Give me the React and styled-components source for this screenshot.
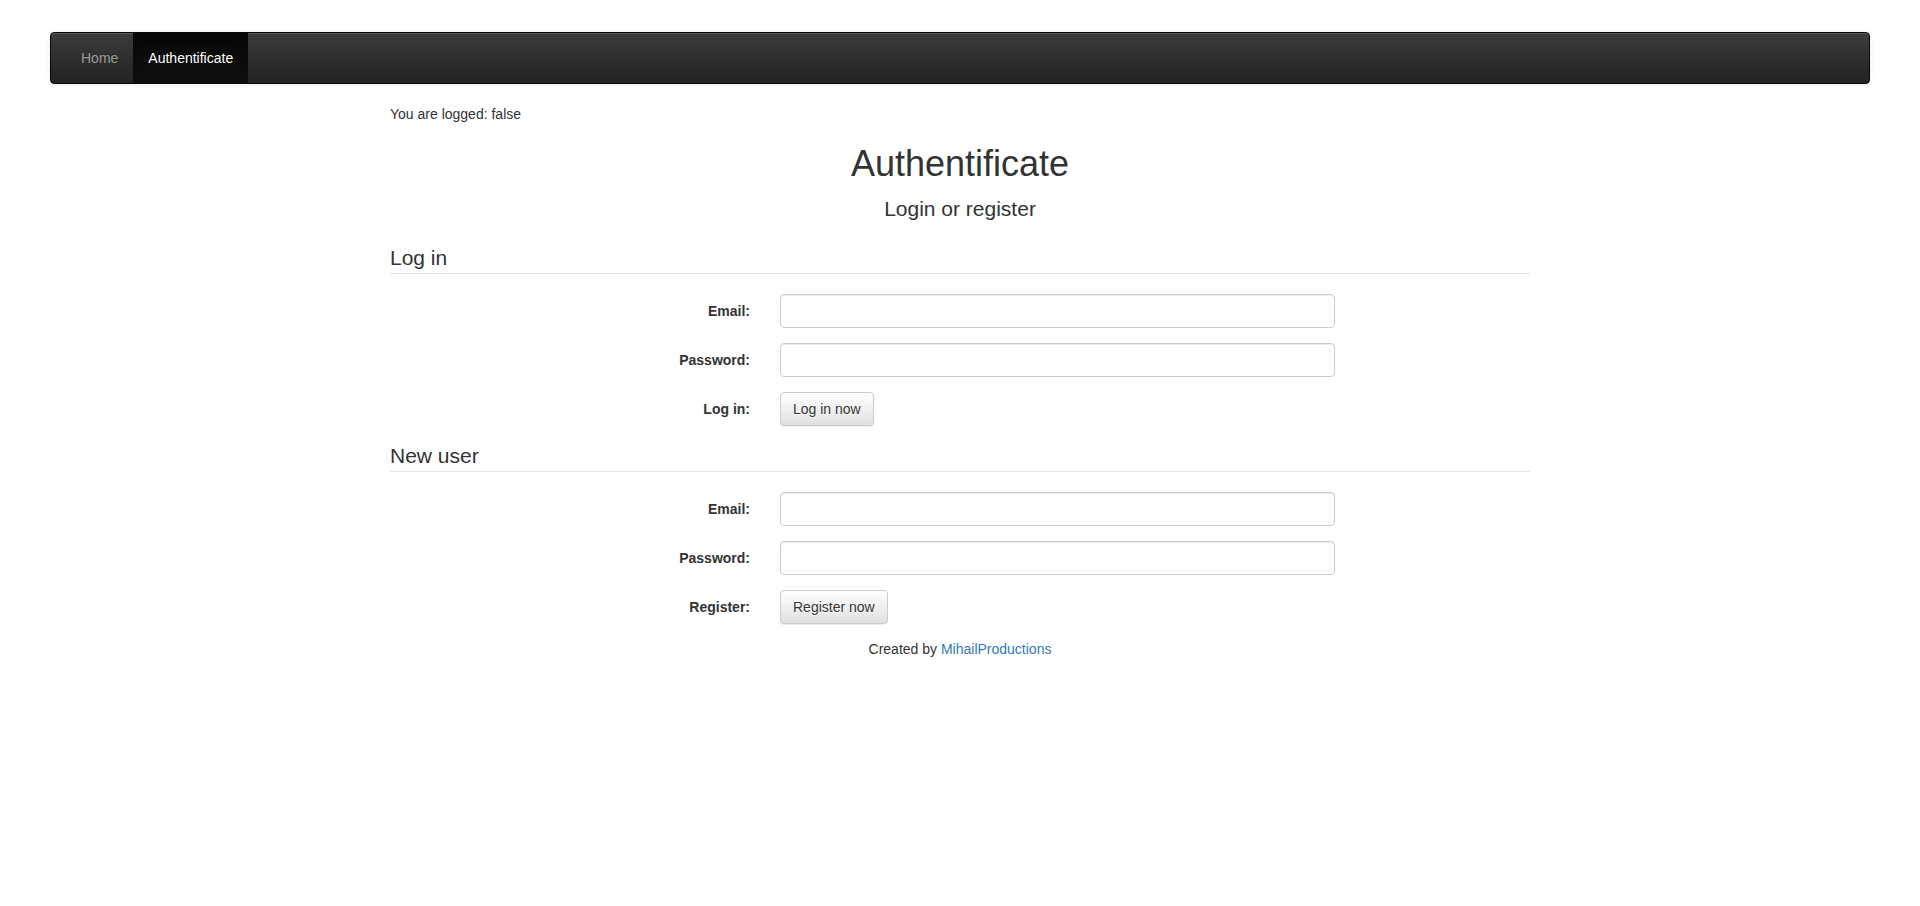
import React from 'react';
import styled, { createGlobalStyle } from 'styled-components';

const GlobalStyle = createGlobalStyle`
  * {
    box-sizing: border-box;
  }
  body {
    margin: 0;
    background: #fff;
    font-family: 'Liberation Sans', Arial, Helvetica, sans-serif;
    font-size: 14px;
    line-height: 1.42857143;
    color: #333;
  }
`;

export default function App() {
  return (
    <>
      <GlobalStyle />
      <Navbar>
        <NavList>
          <NavItem>Home</NavItem>
          <NavItem $active>Authentificate</NavItem>
        </NavList>
      </Navbar>
      <Container>
        <Status>You are logged: false</Status>
        <H1>Authentificate</H1>
        <Lead>Login or register</Lead>
        <Fieldset>
          <Legend>Log in</Legend>
          <FormGroup>
            <Label>Email:</Label>
            <Field>
              <Input type='email' />
            </Field>
          </FormGroup>
          <FormGroup>
            <Label>Password:</Label>
            <Field>
              <Input type='password' />
            </Field>
          </FormGroup>
          <FormGroup>
            <Label>Log in:</Label>
            <Field>
              <Btn type='button'>Log in now</Btn>
            </Field>
          </FormGroup>
        </Fieldset>
        <Fieldset>
          <Legend>New user</Legend>
          <FormGroup>
            <Label>Email:</Label>
            <Field>
              <Input type='email' />
            </Field>
          </FormGroup>
          <FormGroup>
            <Label>Password:</Label>
            <Field>
              <Input type='password' />
            </Field>
          </FormGroup>
          <FormGroup>
            <Label>Register:</Label>
            <Field>
              <Btn type='button'>Register now</Btn>
            </Field>
          </FormGroup>
        </Fieldset>
        <Footer>
          Created by <Link href='#'>MihailProductions</Link>
        </Footer>
      </Container>
    </>
  );
}

const Navbar = styled.nav`
  margin: 32px 50px 20px;
  min-height: 50px;
  padding: 0 15px;
  border: 1px solid #080808;
  border-radius: 4px;
  background-image: linear-gradient(to bottom, #3c3c3c 0, #222 100%);
  box-shadow: inset 0 1px 0 rgba(255, 255, 255, 0.15), 0 1px 5px rgba(0, 0, 0, 0.075);
`;

const NavList = styled.ul`
  display: flex;
  margin: 0;
  padding: 0;
  list-style: none;
`;

const NavItem = styled.li`
  padding: 15px;
  line-height: 20px;
  color: ${(p) => (p.$active ? '#fff' : '#9d9d9d')};
  text-shadow: 0 -1px 0 rgba(0, 0, 0, 0.25);
  background-image: ${(p) =>
    p.$active ? 'linear-gradient(to bottom, #080808 0, #0f0f0f 100%)' : 'none'};
  box-shadow: ${(p) => (p.$active ? 'inset 0 3px 9px rgba(0, 0, 0, 0.25)' : 'none')};
  cursor: pointer;
`;

const Container = styled.div`
  width: 1170px;
  margin: 0 auto;
  padding: 0 15px;
`;

const Status = styled.p`
  margin: 0 0 10px;
`;

const H1 = styled.h1`
  margin: 20px 0 10px;
  font-size: 36px;
  font-weight: 500;
  line-height: 1.1;
  text-align: center;
`;

const Lead = styled.p`
  margin: 0 0 20px;
  font-size: 21px;
  font-weight: 300;
  line-height: 1.4;
  text-align: center;
`;

const Fieldset = styled.fieldset`
  margin: 0;
  padding: 0;
  border: 0;
  min-width: 0;
`;

const Legend = styled.legend`
  display: block;
  width: 100%;
  padding: 0;
  margin-bottom: 20px;
  font-size: 21px;
  line-height: inherit;
  color: #333;
  border: 0;
  border-bottom: 1px solid #e5e5e5;
`;

const FormGroup = styled.div`
  display: flex;
  margin: 0 -15px 15px;
`;

const Label = styled.label`
  width: 33.33333333%;
  padding: 7px 15px 0;
  text-align: right;
  font-weight: 700;
`;

const Field = styled.div`
  width: 50%;
  padding: 0 15px;
`;

const Input = styled.input`
  display: block;
  width: 100%;
  height: 34px;
  padding: 6px 12px;
  font-family: inherit;
  font-size: 14px;
  color: #555;
  background: #fff;
  border: 1px solid #ccc;
  border-radius: 4px;
  box-shadow: inset 0 1px 1px rgba(0, 0, 0, 0.075);
  outline: none;
`;

const Btn = styled.button`
  display: inline-block;
  height: 34px;
  padding: 6px 12px;
  font-family: inherit;
  font-size: 14px;
  line-height: 1.42857143;
  color: #333;
  text-shadow: 0 1px 0 #fff;
  background-image: linear-gradient(to bottom, #fff 0, #e0e0e0 100%);
  border: 1px solid #ccc;
  border-radius: 4px;
  box-shadow: inset 0 1px 0 rgba(255, 255, 255, 0.15), 0 1px 1px rgba(0, 0, 0, 0.075);
  cursor: pointer;
`;

const Footer = styled.div`
  text-align: center;
`;

const Link = styled.a`
  color: #337ab7;
  text-decoration: none;
`;
